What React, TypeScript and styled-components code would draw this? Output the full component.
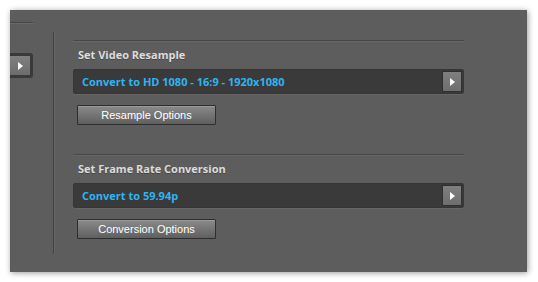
import React from "react";
import styled, { createGlobalStyle } from "styled-components";

const Global = createGlobalStyle`
  html, body { margin: 0; padding: 0; background: #ffffff; }
  body { width: 538px; height: 282px; overflow: hidden; }
`;

const Page = styled.div`
  padding: 10px 0 0 10px;
`;

const Panel = styled.div`
  width: 517px;
  height: 262px;
  background: #5d5d5d;
  box-shadow: 1px 1px 6px rgba(0, 0, 0, 0.4);
  display: flex;
  align-items: flex-start;
  box-sizing: border-box;
`;

const LeftCol = styled.div`
  width: 23px;
  display: flex;
  flex-direction: column;
`;

const TopRule = styled.div`
  margin-top: 12px;
  height: 0;
  border-top: 1px solid #454545;
  border-bottom: 1px solid #6a6a6a;
`;

const SideButton = styled.div`
  margin-top: 29px;
  height: 25px;
  width: 23px;
  box-sizing: border-box;
  background: #3a3a3a;
  border-radius: 0 3px 3px 0;
  padding: 3px 3px 3px 0;
  display: flex;
`;

const SideInner = styled.div`
  flex: 1;
  background: linear-gradient(#808080, #6c6c6c);
  display: flex;
  align-items: center;
  justify-content: center;
`;

const Divider = styled.div`
  margin-left: 20px;
  margin-top: 22px;
  width: 1px;
  height: 222px;
  background: #424242;
  box-shadow: 1px 0 0 #666;
`;

const Content = styled.div`
  margin-left: 19px;
  width: 391px;
  padding-top: 30px;
  display: flex;
  flex-direction: column;
`;

const Section = styled.div<{ $gap?: number }>`
  display: flex;
  flex-direction: column;
  margin-top: ${(p) => p.$gap ?? 0}px;
`;

const Rule = styled.div`
  height: 0;
  border-top: 1px solid #474747;
  border-bottom: 1px solid #676767;
`;

const Title = styled.div`
  margin: 3px 0 0 5px;
  height: 20px;
  font-family: "Open Sans", "DejaVu Sans", sans-serif;
  font-weight: 700;
  font-size: 11px;
  line-height: 20px;
  color: #dcdcdc;
  text-shadow: 0 1px 0 rgba(0, 0, 0, 0.25);
`;

const Dropdown = styled.div`
  margin-top: 4px;
  height: 25px;
  box-sizing: border-box;
  background: #3a3a3a;
  border-radius: 3px;
  box-shadow: 0 1px 0 rgba(255, 255, 255, 0.06), inset 0 0 0 1px #363636;
  display: flex;
  align-items: center;
  padding: 0 2px 0 9px;
`;

const DropText = styled.div`
  flex: 1;
  font-family: "Open Sans", "DejaVu Sans", sans-serif;
  font-weight: 700;
  font-size: 11px;
  color: #2fb4f2;
  white-space: nowrap;
`;

const ArrowBtn = styled.div`
  width: 20px;
  height: 21px;
  box-sizing: border-box;
  background: linear-gradient(#7f7f7f, #6e6e6e);
  border: 1px solid #2f2f2f;
  display: flex;
  align-items: center;
  justify-content: center;
`;

const Arrow = () => (
  <svg width="5" height="8" viewBox="0 0 5 8">
    <path d="M0 0 L5 4 L0 8 Z" fill="#ffffff" />
  </svg>
);

const OptButton = styled.div`
  margin: 11px 0 0 4px;
  width: 139px;
  height: 20px;
  box-sizing: border-box;
  border: 1px solid #2e2e2e;
  border-radius: 1px;
  background: linear-gradient(#8a8a8a, #5f5f5f);
  box-shadow: inset 0 1px 0 rgba(255, 255, 255, 0.15);
  display: flex;
  align-items: center;
  justify-content: center;
  font-family: "Liberation Sans", Arial, sans-serif;
  font-size: 11px;
  color: #ffffff;
`;

export default function App() {
  return (
    <Page>
      <Global />
      <Panel>
        <LeftCol>
          <TopRule />
          <SideButton>
            <SideInner>
              <Arrow />
            </SideInner>
          </SideButton>
        </LeftCol>
        <Divider />
        <Content>
          <Section>
            <Rule />
            <Title>Set Video Resample</Title>
            <Dropdown>
              <DropText>Convert to HD 1080 - 16:9 - 1920x1080</DropText>
              <ArrowBtn>
                <Arrow />
              </ArrowBtn>
            </Dropdown>
            <OptButton>Resample Options</OptButton>
          </Section>
          <Section $gap={29}>
            <Rule />
            <Title>Set Frame Rate Conversion</Title>
            <Dropdown>
              <DropText>Convert to 59.94p</DropText>
              <ArrowBtn>
                <Arrow />
              </ArrowBtn>
            </Dropdown>
            <OptButton>Conversion Options</OptButton>
          </Section>
        </Content>
      </Panel>
    </Page>
  );
}
